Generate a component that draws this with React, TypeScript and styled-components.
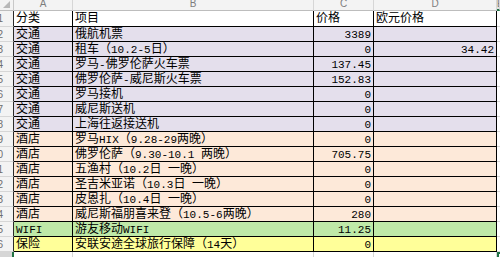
import React from 'react';
import styled, { createGlobalStyle, css } from 'styled-components';

const Global = createGlobalStyle`
  html, body { margin: 0; padding: 0; background: #ffffff; overflow: hidden; }
  body { width: 500px; height: 257px; }
`;

const FILLS: Record<string, string> = {
  white: '#ffffff',
  traffic: '#e4dfec',
  hotel: '#fde9d9',
  wifi: '#bfe9a8',
  ins: '#ffff99',
};

const GREEN = '#217346';

const Sheet = styled.div`
  display: grid;
  grid-template-columns: 14px 59px 241px 60px 123px 1fr;
  grid-template-rows: 11px 16px repeat(15, 15px) 20px;
  width: 500px;
  height: 257px;
  overflow: hidden;
  font-family: "Noto Sans CJK SC", sans-serif;
  font-size: 12px;
  color: #000000;
`;

const Corner = styled.div`
  box-sizing: border-box;
  background: #f3f3f3;
  border-right: 1px solid #c8c8c8;
  border-bottom: 1px solid #bdbdbd;
  display: flex;
  justify-content: flex-end;
  align-items: flex-end;
  padding: 0 3px 2px 0;
`;

const Triangle = styled.span`
  width: 0;
  height: 0;
  border-left: 7px solid transparent;
  border-bottom: 7px solid #b8b8b8;
`;

const ColHead = styled.div<{ $selected?: boolean }>`
  box-sizing: border-box;
  background: ${(p) => (p.$selected ? '#e1e1e1' : '#f3f3f3')};
  border-right: 1px solid #d6d6d6;
  border-bottom: ${(p) => (p.$selected ? `2px solid ${GREEN}` : '1px solid #bdbdbd')};
  overflow: hidden;
  text-align: center;
  font-family: "Liberation Sans", Arial, sans-serif;
  font-size: 10px;
  line-height: 10px;
  color: #7d7d7d;
`;

const ColLetter = styled.span`
  display: block;
  margin-top: -1px;
`;

const RowHead = styled.div<{ $selected?: boolean; $table?: boolean }>`
  box-sizing: border-box;
  background: ${(p) => (p.$selected ? '#d6d6d6' : '#f3f3f3')};
  border-right: ${(p) =>
    p.$selected ? `2px solid ${GREEN}` : `1px solid ${p.$table ? '#2a2a2a' : '#c8c8c8'}`};
  border-bottom: 1px solid #d6d6d6;
  overflow: hidden;
  display: flex;
  justify-content: flex-end;
  align-items: center;
  padding-right: 10px;
  font-family: "Liberation Sans", Arial, sans-serif;
  font-size: 10px;
  color: #6e6e6e;
  white-space: nowrap;
`;

const Cell = styled.div<{ $fill: string; $right?: boolean }>`
  box-sizing: border-box;
  background: ${(p) => FILLS[p.$fill]};
  border-right: 1px solid #000000;
  border-bottom: 1px solid #000000;
  padding: 0 2px;
  line-height: 12px;
  white-space: pre;
  text-align: ${(p) => (p.$right ? 'right' : 'left')};
`;

const Spare = styled.div<{ $selected?: boolean; $last?: boolean }>`
  box-sizing: border-box;
  background: #ffffff;
  ${(p) =>
    p.$last
      ? css`border-right: 1px solid #d6d6d6;`
      : css`border-bottom: 1px solid #d6d6d6;`}
  ${(p) =>
    p.$selected &&
    css`
      box-shadow: inset 2px 2px 0 ${GREEN};
    `}
`;

const Half = styled.span`
  font-family: "Liberation Mono", "Courier New", monospace;
  font-size: 11px;
  line-height: 9px;
`;

function mixed(s: string): React.ReactNode {
  return s
    .split(/([\x20-\x7E]+)/)
    .filter((part) => part.length > 0)
    .map((part, i) =>
      /^[\x20-\x7E]+$/.test(part) ? <Half key={i}>{part}</Half> : <React.Fragment key={i}>{part}</React.Fragment>
    );
}

type Row = { cat: string; item: string; price: string; eur?: string; fill: string };

const rows: Row[] = [
  { cat: '交通', item: '俄航机票', price: '3389', fill: 'traffic' },
  { cat: '交通', item: '租车（10.2-5日）', price: '0', eur: '34.42', fill: 'traffic' },
  { cat: '交通', item: '罗马-佛罗伦萨火车票', price: '137.45', fill: 'traffic' },
  { cat: '交通', item: '佛罗伦萨-威尼斯火车票', price: '152.83', fill: 'traffic' },
  { cat: '交通', item: '罗马接机', price: '0', fill: 'traffic' },
  { cat: '交通', item: '威尼斯送机', price: '0', fill: 'traffic' },
  { cat: '交通', item: '上海往返接送机', price: '0', fill: 'traffic' },
  { cat: '酒店', item: '罗马HIX（9.28-29两晚）', price: '0', fill: 'hotel' },
  { cat: '酒店', item: '佛罗伦萨（9.30-10.1 两晚）', price: '705.75', fill: 'hotel' },
  { cat: '酒店', item: '五渔村（10.2日 一晚）', price: '0', fill: 'hotel' },
  { cat: '酒店', item: '圣吉米亚诺（10.3日 一晚）', price: '0', fill: 'hotel' },
  { cat: '酒店', item: '皮恩扎（10.4日 一晚）', price: '0', fill: 'hotel' },
  { cat: '酒店', item: '威尼斯福朋喜来登（10.5-6两晚）', price: '280', fill: 'hotel' },
  { cat: 'WIFI', item: '游友移动WIFI', price: '11.25', fill: 'wifi' },
  { cat: '保险', item: '安联安途全球旅行保障（14天）', price: '0', fill: 'ins' },
];

export default function App() {
  return (
    <>
      <Global />
      <Sheet>
        <Corner>
          <Triangle />
        </Corner>
        {['A', 'B', 'C', 'D'].map((l) => (
          <ColHead key={l}>
            <ColLetter>{l}</ColLetter>
          </ColHead>
        ))}
        <ColHead $selected>
          <ColLetter>E</ColLetter>
        </ColHead>

        <RowHead $table>1</RowHead>
        <Cell $fill="white">{mixed('分类')}</Cell>
        <Cell $fill="white">{mixed('项目')}</Cell>
        <Cell $fill="white">{mixed('价格')}</Cell>
        <Cell $fill="white">{mixed('欧元价格')}</Cell>
        <Spare />

        {rows.map((r, i) => (
          <React.Fragment key={i}>
            <RowHead $table>{i + 2}</RowHead>
            <Cell $fill={r.fill}>{mixed(r.cat)}</Cell>
            <Cell $fill={r.fill}>{mixed(r.item)}</Cell>
            <Cell $fill={r.fill} $right>
              {mixed(r.price)}
            </Cell>
            <Cell $fill={r.fill} $right>
              {r.eur ? mixed(r.eur) : null}
            </Cell>
            <Spare />
          </React.Fragment>
        ))}

        <RowHead $selected>17</RowHead>
        <Spare $last />
        <Spare $last />
        <Spare $last />
        <Spare $last />
        <Spare $selected />
      </Sheet>
    </>
  );
}
